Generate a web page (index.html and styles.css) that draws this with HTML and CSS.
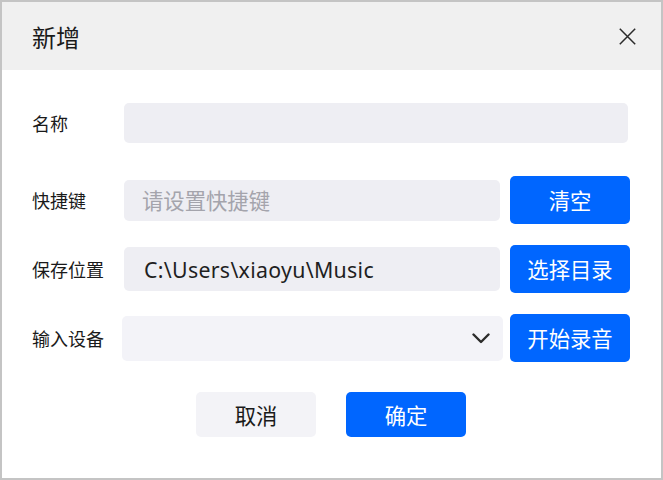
FILE: index.html
```html
<!DOCTYPE html>
<html lang="zh">
<head>
<meta charset="utf-8">
<title>新增</title>
<link rel="stylesheet" href="styles.css">
</head>
<body>
<div class="dialog">
  <div class="header">
    <span class="title">新增</span>
    <svg class="close" width="17" height="17" viewBox="0 0 17 17" aria-label="关闭">
      <path d="M0.8 0.8 L16.2 16.2 M16.2 0.8 L0.8 16.2" stroke="#2b2b2b" stroke-width="1.5" fill="none"/>
    </svg>
  </div>
  <div class="form">
    <div class="row row-first">
      <label class="label">名称</label>
      <input class="field field-full" type="text">
    </div>
    <div class="row">
      <label class="label">快捷键</label>
      <input class="field field-ph" type="text" placeholder="请设置快捷键">
      <button class="btn btn-primary">清空</button>
    </div>
    <div class="row">
      <label class="label">保存位置</label>
      <input class="field field-path" type="text" value="C:\Users\xiaoyu\Music">
      <button class="btn btn-primary">选择目录</button>
    </div>
    <div class="row">
      <label class="label">输入设备</label>
      <div class="select">
        <svg class="chevron" width="18" height="11" viewBox="0 0 18 11">
          <path d="M1.5 1.5 L9 9 L16.5 1.5" stroke="#2b2b2b" stroke-width="2.4" fill="none" stroke-linecap="round" stroke-linejoin="round"/>
        </svg>
      </div>
      <button class="btn btn-primary">开始录音</button>
    </div>
    <div class="footer">
      <button class="btn btn-cancel">取消</button>
      <button class="btn btn-primary btn-ok">确定</button>
    </div>
  </div>
</div>
</body>
</html>
```

FILE: styles.css
```css
* {
  box-sizing: border-box;
}

html, body {
  margin: 0;
  padding: 0;
  background: #ffffff;
}

body {
  font-family: "Noto Sans", "Noto Sans CJK SC", sans-serif;
  color: #1f1f1f;
}

.dialog {
  width: 663px;
  height: 480px;
  border: 2px solid #c4c4c4;
  background: #ffffff;
  display: flex;
  flex-direction: column;
}

.header {
  height: 68px;
  background: #f0f0f0;
  display: flex;
  align-items: center;
  justify-content: space-between;
  padding: 0 25px 0 30px;
  flex: none;
}

.title {
  font-family: "Noto Sans CJK SC", sans-serif;
  font-size: 24px;
  line-height: 1;
  color: #1a1a1a;
  margin-top: 2px;
}

.close {
  display: block;
}

.form {
  padding: 29px 31px 0 30px;
  display: flex;
  flex-direction: column;
  gap: 21px;
}

.row {
  height: 48px;
  display: flex;
  align-items: center;
}

.row-first {
  margin-bottom: 8px;
}

.label {
  width: 92px;
  flex: none;
  font-family: "Noto Sans CJK SC", sans-serif;
  font-size: 18px;
  line-height: 1;
  color: #1a1a1a;
}

.field {
  width: 376px;
  height: 41px;
  border: none;
  outline: none;
  border-radius: 5px;
  background: #eeeef3;
  font-family: "Noto Sans", "Noto Sans CJK SC", sans-serif;
  font-size: 21.33px;
  color: #1f1f1f;
  padding: 0 18px;
  margin: 0;
}

.field-full {
  width: 504px;
  height: 40px;
}

.field-ph::placeholder {
  color: #a4a4ac;
  font-family: "Noto Sans CJK SC", sans-serif;
}

.field-path {
  height: 44px;
  padding-left: 20px;
  letter-spacing: 0.3px;
}

.select {
  width: 381px;
  height: 45px;
  margin-left: -2px;
  margin-right: -3px;
  border-radius: 5px;
  background: #f3f3f8;
  display: flex;
  align-items: center;
  justify-content: flex-end;
  padding-right: 13px;
}

.chevron {
  display: block;
  margin-top: 1px;
}

.btn {
  width: 120px;
  height: 48px;
  border: none;
  border-radius: 5px;
  font-family: "Noto Sans CJK SC", sans-serif;
  font-size: 21.33px;
  line-height: 1;
  padding: 0;
  cursor: pointer;
}

.row .btn {
  margin-left: 10px;
}

.btn-primary {
  background: #0066ff;
  color: #ffffff;
}

.btn-cancel {
  background: #f3f3f7;
  color: #1a1a1a;
}

.footer {
  margin-top: 9px;
  display: flex;
  justify-content: center;
  gap: 30px;
}

.footer .btn {
  height: 45px;
}
```
